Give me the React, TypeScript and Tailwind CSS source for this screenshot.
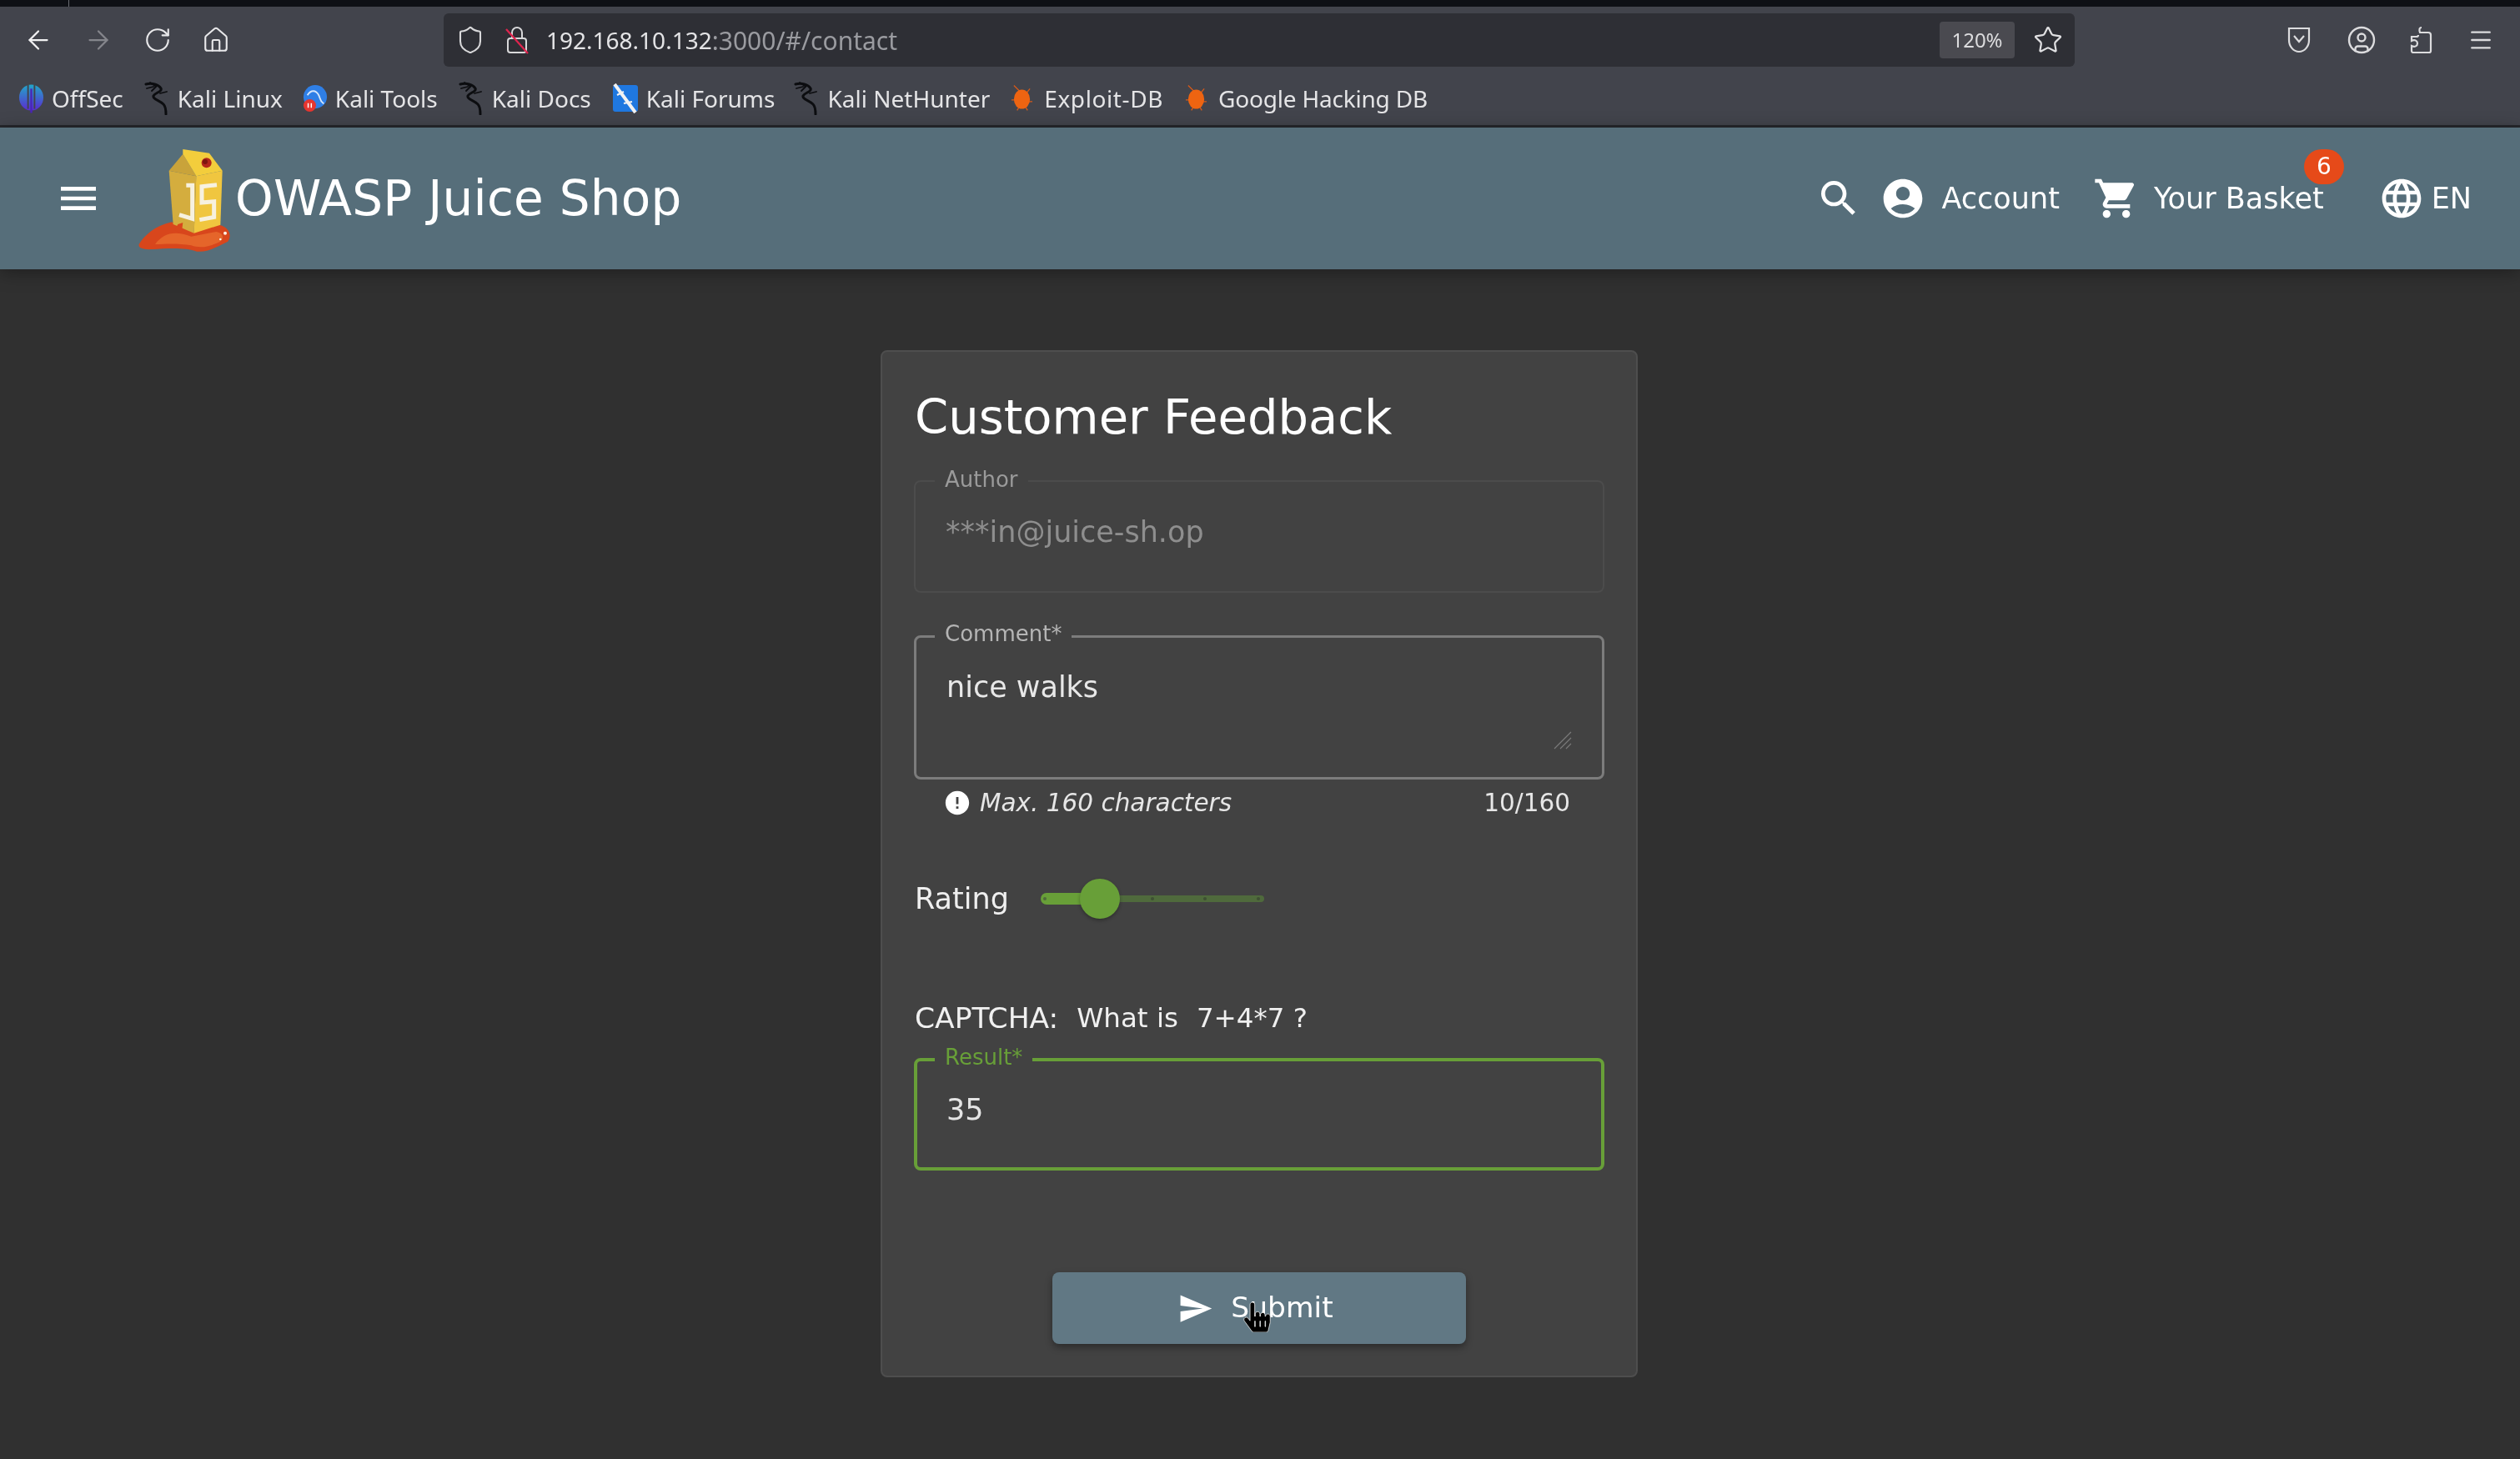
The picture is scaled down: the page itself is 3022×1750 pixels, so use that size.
import React from 'react';
import { ArrowLeft, ArrowRight, RotateCw, Home, Shield, Star, Menu, CircleUser } from 'lucide-react';
import { MdMenu, MdSearch, MdAccountCircle, MdShoppingCart, MdLanguage, MdSend, MdError } from 'react-icons/md';
import { FaHandPointer } from 'react-icons/fa';

const KaliIcon = () => (
  <svg viewBox="0 0 32 40" className="w-[32px] h-[40px]" fill="none" stroke="#0c0d10" strokeLinecap="round">
    <path d="M3 3 C10 1 18 3 21 8 C23 12 14 13 12 17 C11 21 19 22 24 27 C27 30 27 34 27 39" strokeWidth="3" />
    <path d="M4 8 L12 6 M8 1 L14 5 M20 14 L28 12 M16 5 L10 11" strokeWidth="1.8" />
  </svg>
);

const OffSecIcon = () => (
  <svg viewBox="0 0 32 36" className="w-[31px] h-[36px]">
    <defs>
      <linearGradient id="offsec" x1="0" y1="0" x2="0" y2="1">
        <stop offset="0" stopColor="#22a6c9" />
        <stop offset="1" stopColor="#5b2bd0" />
      </linearGradient>
    </defs>
    <ellipse cx="16" cy="17" rx="15" ry="16" fill="url(#offsec)" />
    <path d="M12 1v30M20 1v30" stroke="#42444c" strokeWidth="2" />
    <path d="M16 6v30" stroke="#4a25b8" strokeWidth="2.5" />
  </svg>
);

const ToolsIcon = () => (
  <svg viewBox="0 0 32 36" className="w-[30px] h-[36px]">
    <ellipse cx="16" cy="16" rx="15" ry="15" fill="#2f7fe6" />
    <path d="M6 14 C11 6 17 8 20 13 C23 17 21 21 27 25" fill="none" stroke="#d5e6fb" strokeWidth="2" />
    <circle cx="9" cy="27" r="8" fill="#e5352f" />
    <path d="M7 24v6M11 24v6" stroke="#fff" strokeWidth="1.6" />
  </svg>
);

const ForumsIcon = () => (
  <svg viewBox="0 0 32 36" className="w-[32px] h-[36px]">
    <rect x="1" y="2" width="30" height="32" rx="3" fill="#1f78e0" />
    <path d="M3 1 L28 35" stroke="#f2f2f2" strokeWidth="4" />
    <path d="M6 14 L14 10 M14 24 L24 22" stroke="#f2f2f2" strokeWidth="2" />
  </svg>
);

const BugIcon = () => (
  <svg viewBox="0 0 28 36" className="w-[27px] h-[36px] mr-[4px]">
    <path d="M4 2 L11 9 M24 6 L19 12 M1 20 L6 20 M27 22 L22 22 M8 33 L11 28 M21 33 L18 28" stroke="#d4591a" strokeWidth="1.4" />
    <ellipse cx="14" cy="19" rx="10" ry="12" fill="#ee6411" />
  </svg>
);

const bookmarks = [
  { label: 'OffSec', icon: <OffSecIcon />, gap: 'mr-[24px]', text: '' },
  { label: 'Kali Linux', icon: <KaliIcon />, gap: 'mr-[24px]', text: '' },
  { label: 'Kali Tools', icon: <ToolsIcon />, gap: 'mr-[24px]', text: '' },
  { label: 'Kali Docs', icon: <KaliIcon />, gap: 'mr-[25px]', text: '' },
  { label: 'Kali Forums', icon: <ForumsIcon />, gap: 'mr-[22px]', text: '' },
  { label: 'Kali NetHunter', icon: <KaliIcon />, gap: 'mr-[25px]', text: '' },
  { label: 'Exploit-DB', icon: <BugIcon />, gap: 'mr-[26px]', text: 'tracking-[0.6px]' },
  { label: 'Google Hacking DB', icon: <BugIcon />, gap: '', text: 'tracking-[-0.2px]' },
];

const BrowserChrome = () => (
  <div className="bg-[#42444c] font-['Noto_Sans',sans-serif] text-[28px] text-[#e4e4e6]">
    <div className="h-[8px] bg-[#0e1015] pl-[82px]">
      <div className="w-px h-[8px] bg-[#6b6d73]" />
    </div>

    {/* Nav and url bar */}
    <div className="h-[80px] pt-[8px] flex items-start">
      <div className="h-[64px] flex items-center pl-[28px] gap-[36px] w-[532px]">
        <ArrowLeft className="w-[36px] h-[36px] text-[#f2f2f3]" strokeWidth={1.5} />
        <ArrowRight className="w-[36px] h-[36px] text-[#85868c]" strokeWidth={1.5} />
        <RotateCw className="w-[34px] h-[34px] text-[#e8e8ea]" strokeWidth={1.5} />
        <Home className="w-[34px] h-[34px] text-[#e8e8ea]" strokeWidth={1.5} />
      </div>
      <div className="w-[1956px] h-[64px] bg-[#2e2f35] rounded-[6px] flex items-center pl-[14px] pr-[14px]">
        <Shield className="w-[36px] h-[38px] text-[#d8d8da]" strokeWidth={1.4} />
        <div className="relative ml-[24px] mr-[21px] w-[28px] h-[36px]">
          <svg viewBox="0 0 28 36" className="w-[28px] h-[36px]" fill="none">
            <path d="M8 16 V9 a6 6 0 0 1 12 0 V16" stroke="#d8d8da" strokeWidth="2" />
            <rect x="3" y="16" width="22" height="17" rx="3" stroke="#d8d8da" strokeWidth="2" />
            <path d="M1 5 L27 34" stroke="#e0244e" strokeWidth="2.2" />
          </svg>
        </div>
        <span>192.168.10.132</span>
        <span className="text-[30px] text-[#9a9ba0]">:3000/#/contact</span>
        <div className="ml-auto w-[90px] h-[44px] bg-[#4a4a50] rounded-[4px] flex items-center justify-center text-[24px] text-[#dcdcde]">
          120%
        </div>
        <Star className="ml-[22px] w-[36px] h-[36px] text-[#e0e0e2]" strokeWidth={1.5} />
      </div>
      <div className="h-[64px] flex items-center pl-[254px]">
        <svg viewBox="0 0 30 34" className="w-[30px] h-[34px]" fill="none" stroke="#dcdcde" strokeWidth="2.2">
          <path d="M3 3 H27 V17 A12 14 0 0 1 3 17 Z" />
          <path d="M9 12 L15 19 L21 12" />
        </svg>
        <CircleUser className="ml-[42px] w-[36px] h-[36px] text-[#dcdcde]" strokeWidth={1.6} />
        <svg viewBox="0 0 28 34" className="ml-[40px] w-[28px] h-[34px]" fill="none" stroke="#dcdcde" strokeWidth="2.2">
          <path d="M14 2 C11 2 11 5 12 8 H22 a3 3 0 0 1 3 3 V30 a2 2 0 0 1 -2 2 H4 a2 2 0 0 1 -2 -2 V24 C6 26 9 24 9 21 C9 18 6 16 2 18 V13 H8 C9 13 10 12 10 11" />
        </svg>
        <Menu className="ml-[41px] w-[32px] h-[32px] text-[#dcdcde]" strokeWidth={1.8} />
      </div>
    </div>

    {/* Bookmarks toolbar */}
    <div className="h-[62px] flex items-center pl-[22px] pb-[2px]">
      {bookmarks.map((b) => (
        <div key={b.label} className={`flex items-center gap-[9px] ${b.gap}`}>
          {b.icon}
          <span className={b.text}>{b.label}</span>
        </div>
      ))}
    </div>
    <div className="h-[3px] bg-[#25272c]" />
  </div>
);

const JuiceLogo = () => (
  <svg viewBox="50 45 330 375" className="w-[110px] h-[125px] shrink-0">
    <path d="M52 390 C70 360 110 322 170 310 L245 345 L340 320 C375 328 388 355 372 380 C340 395 300 420 260 416 C220 400 150 405 100 408 C70 410 48 405 52 390 Z" fill="#d8461c" />
    <path d="M110 390 C140 350 180 340 240 362 L330 345 C360 350 360 375 335 385 C300 400 270 405 240 394 C200 386 150 388 110 390 Z" fill="#e5652a" />
    <path d="M160 125 L258 145 L250 350 L175 318 Z" fill="#d4ad3e" />
    <path d="M258 145 L352 125 L345 320 L250 350 Z" fill="#f0c63f" />
    <path d="M210 65 L160 125 L258 145 Z" fill="#c9a33a" />
    <path d="M210 48 L305 62 L352 125 L258 145 L210 65 Z" fill="#f3cd3c" />
    <circle cx="295" cy="97" r="18" fill="#b3261a" />
    <circle cx="290" cy="93" r="9" fill="#7d150f" />
    <path d="M222 178 H244 V298 L197 284" fill="none" stroke="#f7f1df" strokeWidth="15" />
    <path d="M332 176 L278 182 V240 L322 236 V292 L270 302" fill="none" stroke="#f7f1df" strokeWidth="15" />
    <path d="M180 340 L192 318 L210 312 L205 350 Z" fill="#d8461c" />
    <circle cx="362" cy="350" r="6" fill="#fff2e6" />
    <circle cx="345" cy="372" r="4" fill="#fff2e6" />
  </svg>
);

const AppHeader = () => (
  <header className="relative h-[170px] bg-[#566e7a] shadow-[0_4px_20px_rgba(0,0,0,0.35)] flex items-center pl-[66px] pr-[58px] font-['DejaVu_Sans',sans-serif] text-white">
    <MdMenu className="w-[56px] h-[56px] shrink-0" />
    <div className="ml-[44px] mt-[5px]">
      <JuiceLogo />
    </div>
    <span className="ml-[6px] text-[58px] leading-none tracking-[0.25px]">OWASP Juice Shop</span>
    <div className="ml-auto flex items-center text-[35px]">
      <MdSearch className="w-[56px] h-[56px]" />
      <MdAccountCircle className="ml-[21px] w-[56px] h-[56px]" />
      <span className="ml-[19px]">Account</span>
      <MdShoppingCart className="ml-[40px] w-[56px] h-[56px]" />
      <div className="relative ml-[17px]">
        <span>Your Basket</span>
        <div className="absolute left-[180px] top-[-33px] w-[48px] h-[42px] rounded-full bg-[#e64a19] flex items-center justify-center text-[28px]">
          6
        </div>
      </div>
      <MdLanguage className="ml-[65px] w-[56px] h-[56px]" />
      <span className="ml-[8px]">EN</span>
    </div>
  </header>
);

const FeedbackForm = () => (
  <div className="w-[908px] mx-auto bg-[#424242] border-2 border-[#4e4e4e] rounded-[8px] pt-[47px] pb-[38px] px-[38px] text-white">
    <h1 className="h-[64px] text-[57.6px] leading-[64px] ml-[1px]">Customer Feedback</h1>

    {/* Author */}
    <div className="relative mt-[43px] h-[135px] border-2 border-[#4c4c4c] rounded-[8px] pl-[36px] pt-[38px] text-[35px] leading-[44px] text-[#8e8e8e]">
      <span className="absolute left-[23px] top-[-17px] bg-[#424242] px-[12px] text-[26px] leading-[28px] text-[#9a9a9a]">Author</span>
      ***in@juice-sh.op
    </div>

    {/* Comment */}
    <div className="relative mt-[51px] h-[173px] border-[3px] border-[#7c7c7c] rounded-[8px] pl-[36px] pt-[37px] text-[35px] leading-[44px] text-[#e8e8e8]">
      <span className="absolute left-[22px] top-[-19px] bg-[#424242] px-[12px] text-[26px] leading-[28px] text-[#b5b5b5]">Comment*</span>
      nice walks
      <svg viewBox="0 0 22 22" className="absolute right-[36px] bottom-[33px] w-[22px] h-[22px]" stroke="#7a7a7a" strokeWidth="1.2">
        <path d="M1 21 L21 1 M8 21 L21 8 M15 21 L21 15" />
      </svg>
    </div>

    {/* Hint */}
    <div className="mt-[14px] h-[28px] pl-[38px] pr-[41px] flex items-center justify-between text-[29.5px] leading-[28px] text-[#e6e6e6]">
      <div className="flex items-center">
        <MdError className="w-[34px] h-[34px] text-white ml-[-3px]" />
        <span className="ml-[10px] italic">Max. 160 characters</span>
      </div>
      <span>10/160</span>
    </div>

    {/* Rating */}
    <div className="mt-[77px] h-[48px] flex items-center">
      <span className="ml-[1px] text-[35px] leading-[48px] text-[#efefef]">Rating</span>
      <div className="relative ml-[38px] w-[268px] h-[48px]">
        <div className="absolute left-[60px] right-0 top-[20px] h-[8px] rounded-full bg-[#4f6a3c]" />
        <div className="absolute left-0 w-[61px] top-[17px] h-[14px] rounded-full bg-[#689f38]" />
        <div className="absolute left-[3px] top-[22px] w-[4px] h-[4px] rounded-full bg-[#4f6a3c]" />
        <div className="absolute left-[132px] top-[22px] w-[4px] h-[4px] rounded-full bg-[#3e4f33]" />
        <div className="absolute left-[195px] top-[22px] w-[4px] h-[4px] rounded-full bg-[#3e4f33]" />
        <div className="absolute left-[259px] top-[22px] w-[4px] h-[4px] rounded-full bg-[#3e4f33]" />
        <div className="absolute left-[47px] top-0 w-[48px] h-[48px] rounded-full bg-[#689f38] shadow-[0_2px_4px_rgba(0,0,0,0.3)]" />
      </div>
    </div>

    {/* Captcha */}
    <div className="mt-[99px] h-[40px] flex items-center text-[32.5px] leading-[40px] text-[#f0f0f0]">
      <span className="ml-[1px] text-[34.5px]">CAPTCHA:</span>
      <span className="ml-[22px]">What is</span>
      <span className="ml-[22px]">7+4*7 ?</span>
    </div>

    {/* Result */}
    <div className="relative mt-[28px] h-[135px] border-4 border-[#689f38] rounded-[8px] pl-[35px] pt-[36px] text-[35px] leading-[44px] text-[#e4e4e4]">
      <span className="absolute left-[21px] top-[-19px] bg-[#424242] px-[12px] text-[26px] leading-[28px] text-[#689f38]">Result*</span>
      35
    </div>

    {/* Submit */}
    <div className="mt-[122px] flex justify-center">
      <button className="relative w-[496px] h-[86px] pr-[9px] bg-[#617884] rounded-[8px] shadow-[0_4px_8px_rgba(0,0,0,0.35)] flex items-center justify-center text-[34.5px] text-white">
        <MdSend className="w-[43px] h-[43px] mr-[21px]" />
        Submit
        <FaHandPointer className="absolute left-[228px] top-[36px] w-[35px] h-[36px] text-black stroke-white stroke-[10px]" />
      </button>
    </div>
  </div>
);

export default function App() {
  return (
    <div className="w-[3022px] h-[1750px] overflow-hidden bg-[#303030] font-['DejaVu_Sans',sans-serif] blur-[0.7px]">
      <BrowserChrome />
      <AppHeader />
      <main className="pt-[97px] pr-[2px]">
        <FeedbackForm />
      </main>
    </div>
  );
}
